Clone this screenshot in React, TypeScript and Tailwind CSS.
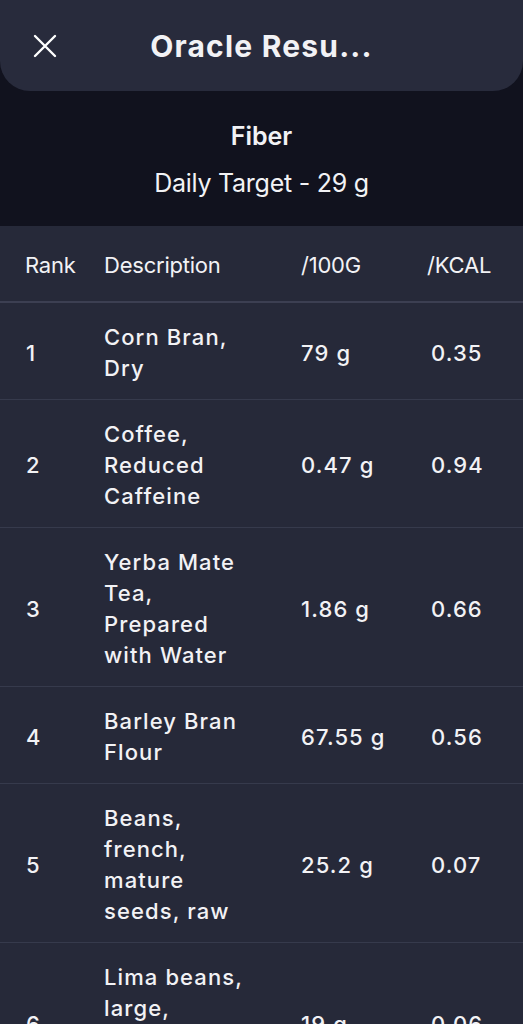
const rows = [
  { rank: "1", desc: "Corn Bran, Dry", per100: "79 g", kcal: "0.35" },
  { rank: "2", desc: "Coffee, Reduced Caffeine", per100: "0.47 g", kcal: "0.94" },
  { rank: "3", desc: "Yerba Mate Tea, Prepared with Water", per100: "1.86 g", kcal: "0.66" },
  { rank: "4", desc: "Barley Bran Flour", per100: "67.55 g", kcal: "0.56" },
  { rank: "5", desc: "Beans, french, mature seeds, raw", per100: "25.2 g", kcal: "0.07" },
  { rank: "6", desc: "Lima beans, large, mature seeds, raw", per100: "19 g", kcal: "0.06" },
];

function CloseIcon() {
  return (
    <svg width="24" height="24" viewBox="0 0 24 24" fill="none" stroke="currentColor" strokeWidth="2.4" strokeLinecap="round">
      <path d="M2 2L22 22M22 2L2 22" />
    </svg>
  );
}

export default function App() {
  return (
    <div className="min-h-[1024px] w-full bg-[#11121e] text-[#f2f2f5] font-['Inter',sans-serif] overflow-hidden">
      <header className="grid grid-cols-[90px_1fr_90px] items-center h-[91px] bg-[#282b3c] rounded-b-[30px]">
        <div className="flex justify-center text-white">
          <CloseIcon />
        </div>
        <h1 className="text-center text-[30px] font-bold tracking-[0.04em] leading-none">Oracle Resu...</h1>
        <div />
      </header>

      <section className="flex flex-col items-center pt-[29px] pb-[27px]">
        <div className="text-[25px] font-semibold leading-[32px]">Fiber</div>
        <div className="mt-[15px] text-[25px] leading-[32px] tracking-[-0.01em]">Daily Target - 29 g</div>
      </section>

      <div className="bg-[#262939]">
        <div className="flex items-center h-[77px] pt-[4px] border-b-2 border-[#3c3f52] text-[22px] tracking-[-0.01em]">
          <div className="w-[104px] pl-[25px]">Rank</div>
          <div className="w-[197px]">Description</div>
          <div className="w-[126px]">/100G</div>
          <div className="flex-1">/KCAL</div>
        </div>
        {rows.map((r) => (
          <div key={r.rank} className="flex items-center pt-[19px] pb-[15px] border-b border-[#363a4c] text-[22px] font-medium leading-[31px] tracking-[0.05em]">
            <div className="w-[104px] pl-[26px]">{r.rank}</div>
            <div className="w-[197px]">
              <div className="max-w-[150px]">{r.desc}</div>
            </div>
            <div className="w-[126px]">{r.per100}</div>
            <div className="flex-1 pl-[4px]">{r.kcal}</div>
          </div>
        ))}
      </div>
    </div>
  );
}
